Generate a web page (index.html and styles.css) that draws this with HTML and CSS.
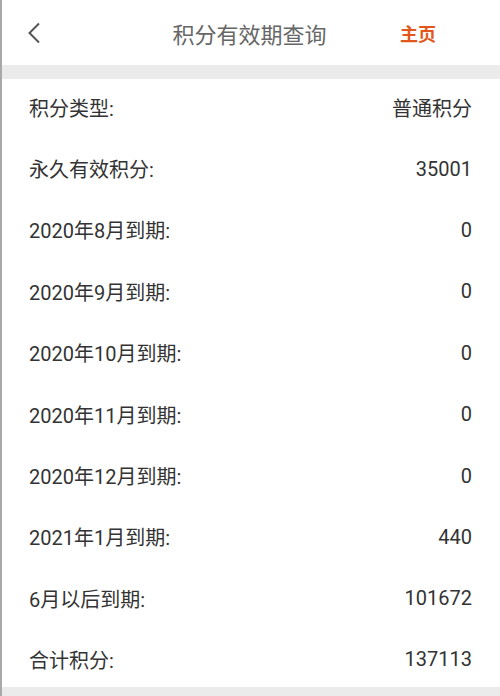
FILE: index.html
```html
<!DOCTYPE html>
<html lang="zh-CN">
<head>
    <meta charset="UTF-8">
    <meta name="viewport" content="width=device-width, initial-scale=1.0">
    <title>积分有效期查询</title>
    <link rel="stylesheet" href="styles.css">
</head>
<body>
    <div class="page">
        <div class="header">
            <div class="side">
                <a class="back" href="#">
                    <svg width="14" height="22" viewBox="0 0 14 22">
                        <polyline points="12,1.5 2.5,11 12,20.5" fill="none" stroke="#555" stroke-width="2"/>
                    </svg>
                </a>
            </div>
            <div class="title">积分有效期查询</div>
            <div class="side">
                <a class="home" href="#">主页</a>
            </div>
        </div>
        <div class="gap"></div>
        <div class="list">
            <div class="row"><span>积分类型:</span><span>普通积分</span></div>
            <div class="row"><span>永久有效积分:</span><span>35001</span></div>
            <div class="row"><span>2020年8月到期:</span><span>0</span></div>
            <div class="row"><span>2020年9月到期:</span><span>0</span></div>
            <div class="row"><span>2020年10月到期:</span><span>0</span></div>
            <div class="row"><span>2020年11月到期:</span><span>0</span></div>
            <div class="row"><span>2020年12月到期:</span><span>0</span></div>
            <div class="row"><span>2021年1月到期:</span><span>440</span></div>
            <div class="row"><span>6月以后到期:</span><span>101672</span></div>
            <div class="row"><span>合计积分:</span><span>137113</span></div>
        </div>
        <div class="footer"></div>
    </div>
</body>
</html>
```

FILE: styles.css
```css
body {
    margin: 0;
    font-family: Roboto, "Noto Sans CJK SC", sans-serif;
    background-color: #fff;
}

.page {
    border-left: 2px solid #a9a9a9;
    height: 696px;
    display: flex;
    flex-direction: column;
    box-sizing: border-box;
}

.header {
    height: 65px;
    display: flex;
    align-items: center;
}

.side {
    width: 100px;
    display: flex;
    align-items: center;
}

.back {
    display: flex;
    width: 14px;
    height: 22px;
    margin-left: 25px;
}

.title {
    flex: 1;
    text-align: center;
    font-size: 22px;
    color: #666;
    margin-right: 3px;
}

.home {
    font-size: 18px;
    font-weight: bold;
    color: #e4571c;
    text-decoration: none;
}

.gap {
    height: 14px;
    background-color: #ebebec;
}

.list {
    display: flex;
    flex-direction: column;
}

.row {
    height: 61.4px;
    box-sizing: border-box;
    padding: 0 28px 5px 27px;
    display: flex;
    align-items: center;
    justify-content: space-between;
    font-size: 20px;
    color: #333;
}

.row:last-child {
    height: 55px;
    padding-bottom: 0;
}

.footer {
    flex: 1;
    background-color: #ebebec;
}
```
